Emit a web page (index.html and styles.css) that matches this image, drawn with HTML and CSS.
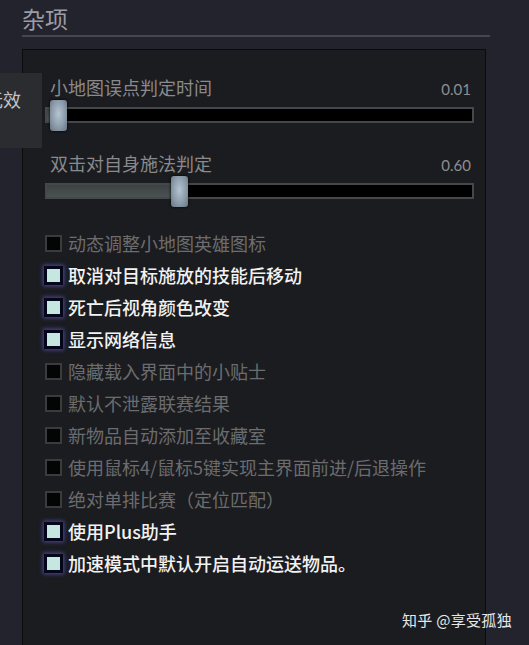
FILE: index.html
```html
<!DOCTYPE html>
<html lang="zh">
<head>
<meta charset="utf-8">
<link rel="stylesheet" href="styles.css">
</head>
<body>
<div class="page">
  <h1 class="title">杂项</h1>
  <div class="rule"></div>
  <div class="panel">
    <div class="slider">
      <div class="slider-head"><span class="slider-label">小地图误点判定时间</span><span class="slider-value">0.01</span></div>
      <div class="track">
        <div class="fill" style="width: 1%"></div>
        <div class="thumb" style="left: 3px"></div>
      </div>
    </div>
    <div class="slider">
      <div class="slider-head"><span class="slider-label">双击对自身施法判定</span><span class="slider-value">0.60</span></div>
      <div class="track">
        <div class="fill" style="width: 131px"></div>
        <div class="thumb" style="left: 124px"></div>
      </div>
    </div>
    <ul class="options">
      <li class="opt"><span class="box"></span>动态调整小地图英雄图标</li>
      <li class="opt on"><span class="box"></span>取消对目标施放的技能后移动</li>
      <li class="opt on"><span class="box"></span>死亡后视角颜色改变</li>
      <li class="opt on"><span class="box"></span>显示网络信息</li>
      <li class="opt"><span class="box"></span>隐藏载入界面中的小贴士</li>
      <li class="opt"><span class="box"></span>默认不泄露联赛结果</li>
      <li class="opt"><span class="box"></span>新物品自动添加至收藏室</li>
      <li class="opt"><span class="box"></span>使用鼠标4/鼠标5键实现主界面前进/后退操作</li>
      <li class="opt"><span class="box"></span>绝对单排比赛（定位匹配）</li>
      <li class="opt on"><span class="box"></span>使用Plus助手</li>
      <li class="opt on"><span class="box"></span>加速模式中默认开启自动运送物品。</li>
    </ul>
  </div>
  <div class="side-tab"><span>无效</span></div>
  <div class="watermark">知乎 @享受孤独</div>
</div>
</body>
</html>
```
FILE: styles.css
```css
html, body {
  margin: 0;
  padding: 0;
  height: 100%;
  overflow: hidden;
}
body {
  background: #22232c;
  font-family: "Noto Sans CJK SC", "Noto Sans", sans-serif;
}
.page {
  position: relative;
  height: 645px;
  padding-left: 22px;
  box-sizing: border-box;
}
.title {
  margin: 0;
  padding-top: 5px;
  font-size: 23px;
  font-weight: 400;
  line-height: 27px;
  color: #9c9ca4;
}
.rule {
  width: 468px;
  height: 2px;
  margin-top: 3px;
  background: #45464f;
}
.panel {
  width: 464px;
  height: 600px;
  margin-top: 12px;
  box-sizing: border-box;
  border: 1px solid #0b0b0e;
  border-bottom: none;
  background: #1b1c20;
  padding: 26px 11px 0 22px;
}
.slider {
  margin-bottom: 29px;
}
.slider-head {
  display: flex;
  justify-content: space-between;
  align-items: baseline;
  padding: 0 3px 0 5px;
  height: 22px;
}
.slider-label {
  font-size: 18px;
  line-height: 22px;
  color: #8a8a8c;
}
.slider-value {
  font-family: "Lato", "Noto Sans", sans-serif;
  font-size: 15px;
  color: #8e8e90;
}
.track {
  position: relative;
  margin-top: 9px;
  height: 16px;
  box-sizing: border-box;
  border: 2px solid #46474a;
  background: #000;
}
.fill {
  height: 100%;
  background: linear-gradient(#3c4242, #4a5252);
}
.thumb {
  position: absolute;
  top: -9px;
  width: 17px;
  height: 31px;
  border-radius: 3px;
  background: radial-gradient(ellipse at 50% 45%, #b4c4d2 0%, #8d9cab 55%, #67737f 100%);
  box-shadow: 0 0 3px #000;
}
.options {
  list-style: none;
  margin: -1px 0 0;
  padding: 0;
}
.opt {
  display: flex;
  align-items: center;
  gap: 6px;
  height: 32px;
  font-size: 18px;
  color: #6c6c6e;
}
.box {
  width: 17px;
  height: 17px;
  box-sizing: border-box;
  border: 2px solid #3b3b3d;
  background: #040404;
  flex: none;
}
.opt.on {
  color: #f2f2f2;
  font-weight: 500;
}
.opt.on .box {
  width: 19px;
  height: 19px;
  margin-left: -1px;
  margin-right: -1px;
  border: 3px solid #06061a;
  background: #c6e6e2;
  box-shadow: 0 0 4px 1px #4b4a9a;
}
.side-tab {
  position: absolute;
  left: 0;
  top: 73px;
  width: 43px;
  height: 75px;
  overflow: hidden;
  background: #2a2c30;
  border-right: 1px solid #1a1b1e;
  box-sizing: border-box;
  display: flex;
  justify-content: flex-end;
  padding-top: 14px;
}
.side-tab span {
  font-size: 18px;
  line-height: 24px;
  color: #c4c4c6;
  white-space: nowrap;
  margin-right: 21px;
}
.watermark {
  position: absolute;
  left: 402px;
  top: 609px;
  font-size: 15px;
  color: #e8e8e8;
  letter-spacing: 0.3px;
}
```
